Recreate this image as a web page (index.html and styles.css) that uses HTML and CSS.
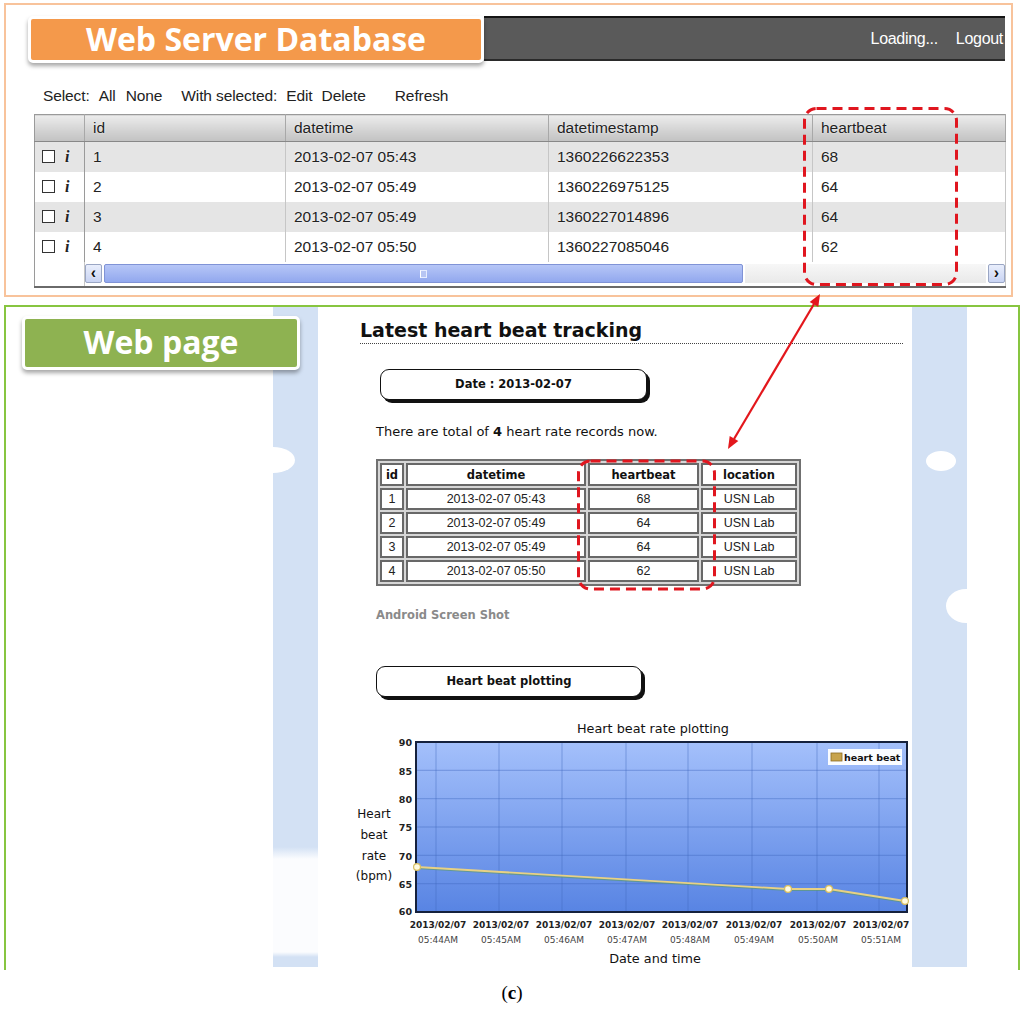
FILE: index.html
```html
<!DOCTYPE html>
<html>
<head>
<meta charset="utf-8">
<title>Heart beat tracking</title>
<link rel="stylesheet" href="styles.css">
</head>
<body>
<div class="page">
  <section class="db-panel">
    <div class="db-header">
      <div class="badge badge-orange">Web Server Database</div>
      <div class="topbar"><span>Loading...</span><span class="logout">Logout</span></div>
    </div>
    <div class="toolbar">
      <span>Select:</span><span class="g9">All</span><span class="g10">None</span><span class="g19">With selected:</span><span class="g9">Edit</span><span class="g9">Delete</span><span class="g29">Refresh</span>
    </div>
    <table class="grid">
      <colgroup><col class="c0"><col class="c1"><col class="c2"><col class="c3"><col class="c4"></colgroup>
      <thead>
        <tr><th></th><th>id</th><th>datetime</th><th>datetimestamp</th><th>heartbeat</th></tr>
      </thead>
      <tbody>
        <tr class="odd"><td class="sel"><span class="cb"></span><i class="info">i</i></td><td>1</td><td>2013-02-07 05:43</td><td>1360226622353</td><td>68</td></tr>
        <tr><td class="sel"><span class="cb"></span><i class="info">i</i></td><td>2</td><td>2013-02-07 05:49</td><td>1360226975125</td><td>64</td></tr>
        <tr class="odd"><td class="sel"><span class="cb"></span><i class="info">i</i></td><td>3</td><td>2013-02-07 05:49</td><td>1360227014896</td><td>64</td></tr>
        <tr><td class="sel"><span class="cb"></span><i class="info">i</i></td><td>4</td><td>2013-02-07 05:50</td><td>1360227085046</td><td>62</td></tr>
        <tr class="scroll"><td class="blank"></td><td colspan="4" class="scell">
          <div class="sbar"><span class="sbtn">&lsaquo;</span><span class="thumb"><span class="grip"></span></span><span class="track"></span><span class="sbtn">&rsaquo;</span></div>
        </td></tr>
      </tbody>
    </table>
  </section>

  <section class="web-panel">
    <div class="web-left">
      <div class="badge badge-green">Web page</div>
    </div>
    <div class="strip strip-left"><span class="cloud cl1"></span></div>
    <div class="webpage">
      <h1 class="wp-title">Latest heart beat tracking</h1>
      <div class="pill pill-date">Date : 2013-02-07</div>
      <p class="total">There are total of <b>4</b> heart rate records now.</p>
      <table class="records">
        <colgroup><col class="r0"><col class="r1"><col class="r2"><col class="r3"></colgroup>
        <tr><th>id</th><th>datetime</th><th>heartbeat</th><th>location</th></tr>
        <tr><td>1</td><td>2013-02-07 05:43</td><td>68</td><td>USN Lab</td></tr>
        <tr><td>2</td><td>2013-02-07 05:49</td><td>64</td><td>USN Lab</td></tr>
        <tr><td>3</td><td>2013-02-07 05:49</td><td>64</td><td>USN Lab</td></tr>
        <tr><td>4</td><td>2013-02-07 05:50</td><td>62</td><td>USN Lab</td></tr>
      </table>
      <p class="android">Android Screen Shot</p>
      <div class="pill pill-plot">Heart beat plotting</div>
      <svg class="chart" width="572" height="252" viewBox="0 0 572 252">
        <defs>
          <linearGradient id="plotbg" x1="0" y1="0" x2="0" y2="1">
            <stop offset="0" stop-color="#a4c0fb"/>
            <stop offset="1" stop-color="#5884e3"/>
          </linearGradient>
        </defs>
        <text class="ct-title" x="313" y="18" text-anchor="middle">Heart beat rate plotting</text>
        <rect x="76" y="27" width="491" height="170" fill="url(#plotbg)"/>
        <g stroke="#3f66bd" stroke-opacity="0.45" stroke-width="1">
          <line x1="76" y1="55.3" x2="567" y2="55.3"/>
          <line x1="76" y1="83.7" x2="567" y2="83.7"/>
          <line x1="76" y1="112" x2="567" y2="112"/>
          <line x1="76" y1="140.3" x2="567" y2="140.3"/>
          <line x1="76" y1="168.7" x2="567" y2="168.7"/>
          <line x1="96" y1="27" x2="96" y2="197"/>
          <line x1="159" y1="27" x2="159" y2="197"/>
          <line x1="222" y1="27" x2="222" y2="197"/>
          <line x1="286" y1="27" x2="286" y2="197"/>
          <line x1="348" y1="27" x2="348" y2="197"/>
          <line x1="412" y1="27" x2="412" y2="197"/>
          <line x1="477" y1="27" x2="477" y2="197"/>
          <line x1="539" y1="27" x2="539" y2="197"/>
        </g>
        <rect x="76" y="27" width="491" height="170" fill="none" stroke="#15213d" stroke-width="2"/>
        <polyline points="77,153 448,175 489,175 565,187" fill="none" stroke="#5f9a73" stroke-width="2" stroke-opacity="0.7"/>
        <polyline points="77,152 448,174 489,174 565,186" fill="none" stroke="#e8d184" stroke-width="1.8"/>
        <g fill="#fffbe2" stroke="#d7bd5e" stroke-width="1.2">
          <circle cx="77" cy="152" r="3.4"/>
          <circle cx="448" cy="174" r="3.4"/>
          <circle cx="489" cy="174" r="3.4"/>
          <circle cx="565" cy="186" r="3.4"/>
        </g>
        <rect x="488" y="34" width="74" height="16" fill="#ffffff" fill-opacity="0.95"/>
        <rect x="491" y="38" width="11" height="8" fill="#c7a34c" stroke="#8d6c22" stroke-width="0.8"/>
        <text class="ct-legend" x="504" y="46">heart beat</text>
        <g class="ct-ynum" text-anchor="end">
          <text x="72" y="31">90</text>
          <text x="72" y="60">85</text>
          <text x="72" y="88">80</text>
          <text x="72" y="116">75</text>
          <text x="72" y="145">70</text>
          <text x="72" y="173">65</text>
          <text x="72" y="200">60</text>
        </g>
        <g class="ct-ytitle" text-anchor="middle">
          <text x="34" y="103">Heart</text>
          <text x="34" y="124">beat</text>
          <text x="34" y="145">rate</text>
          <text x="34" y="165">(bpm)</text>
        </g>
        <g class="ct-date" text-anchor="middle">
          <text x="98" y="213">2013/02/07</text>
          <text x="161" y="213">2013/02/07</text>
          <text x="224" y="213">2013/02/07</text>
          <text x="287" y="213">2013/02/07</text>
          <text x="350" y="213">2013/02/07</text>
          <text x="414" y="213">2013/02/07</text>
          <text x="478" y="213">2013/02/07</text>
          <text x="541" y="213">2013/02/07</text>
        </g>
        <g class="ct-time" text-anchor="middle">
          <text x="98" y="228">05:44AM</text>
          <text x="161" y="228">05:45AM</text>
          <text x="224" y="228">05:46AM</text>
          <text x="287" y="228">05:47AM</text>
          <text x="350" y="228">05:48AM</text>
          <text x="414" y="228">05:49AM</text>
          <text x="478" y="228">05:50AM</text>
          <text x="541" y="228">05:51AM</text>
        </g>
        <text class="ct-title" x="315" y="248" text-anchor="middle">Date and time</text>
      </svg>
    </div>
    <div class="strip strip-right"><span class="cloud cl2"></span><span class="cloud cl3"></span></div>
    <div class="web-rest"></div>
  </section>

  <div class="caption">(<b>c</b>)</div>
</div>

<svg class="overlay" width="1024" height="1009" viewBox="0 0 1024 1009">
  <rect x="804.5" y="108.5" width="152" height="176" rx="12" fill="none" stroke="#e0161f" stroke-width="3" stroke-dasharray="10 6"/>
  <rect x="578.5" y="461" width="136" height="128" rx="12" fill="none" stroke="#e0161f" stroke-width="3" stroke-dasharray="10 6"/>
  <line x1="814" y1="304" x2="734" y2="439" stroke="#e3171c" stroke-width="2.2"/>
  <polygon points="820,294 818.3,306.9 809.7,301.9" fill="#e3171c"/>
  <polygon points="728,449 738.3,441.1 729.7,436.1" fill="#e3171c"/>
</svg>
</body>
</html>
```

FILE: styles.css
```css
* { box-sizing: border-box; }

html, body {
  margin: 0;
  padding: 0;
  background: #ffffff;
}

body {
  width: 1024px;
  height: 1009px;
  position: relative;
  overflow: hidden;
  font-family: "Liberation Sans", Arial, sans-serif;
  color: #222;
}

.page {
  padding: 3px 0 0 4px;
}

/* ---------- top panel ---------- */
.db-panel {
  width: 1009px;
  height: 294px;
  border: 2px solid #f8c39b;
  padding: 11px 6px 0 22px;
}

.db-header {
  display: flex;
  align-items: flex-start;
  height: 47px;
}

.badge {
  border: 3px solid #ffffff;
  border-radius: 5px;
  color: #fff;
  font-family: "Open Sans", "Noto Sans", sans-serif;
  font-weight: 700;
  text-align: center;
  box-shadow: 0 3px 4px rgba(0, 0, 0, 0.35);
  position: relative;
  z-index: 2;
}

.badge-orange {
  width: 456px;
  height: 47px;
  background: #f4994b;
  font-size: 32px;
  line-height: 40px;
}

.topbar {
  flex: 1;
  height: 45px;
  background: #5a5a5a;
  border-top: 2px solid #151515;
  border-bottom: 2px solid #2a2a2a;
  display: flex;
  justify-content: flex-end;
  align-items: center;
  padding-right: 2px;
  color: #fff;
  font-size: 16px;
  letter-spacing: -0.3px;
}

.topbar .logout { margin-left: 18px; }

.toolbar {
  height: 51px;
  display: flex;
  align-items: flex-end;
  padding: 0 0 9px 15px;
  font-size: 15.5px;
  letter-spacing: -0.1px;
  line-height: 18px;
  color: #222;
}

.g9 { margin-left: 9px; }
.g10 { margin-left: 10px; }
.g19 { margin-left: 19px; }
.g29 { margin-left: 29px; }

.grid {
  margin-left: 6px;
  width: 971px;
  table-layout: fixed;
  border-collapse: collapse;
  border: 1px solid #9a9a9a;
  border-bottom: 2px solid #6a6a6a;
  font-size: 15.5px;
  color: #222;
}

.grid .c0 { width: 50px; }
.grid .c1 { width: 201px; }
.grid .c2 { width: 263px; }
.grid .c3 { width: 264px; }
.grid .c4 { width: 193px; }

.grid th {
  height: 27px;
  padding: 0 0 0 8px;
  text-align: left;
  font-weight: normal;
  background: linear-gradient(#ececec, #d2d2d2 60%, #c2c2c2);
  border-right: 1px solid #a8a8a8;
  border-bottom: 1px solid #888;
  text-shadow: 0 0 2px #fff;
}

.grid td {
  height: 30px;
  padding: 0 0 0 8px;
  border-right: 1px solid #c6c6c6;
  background: #ffffff;
  white-space: nowrap;
  text-shadow: 0 0 2px #fff;
}

.grid tr.odd td { background: #e5e5e5; }

.grid td.sel {
  padding-left: 7px;
  border-right: 1px solid #9a9a9a;
}

.cb {
  display: inline-block;
  width: 13px;
  height: 13px;
  border: 1.5px solid #333;
  background: #fff;
  vertical-align: -1px;
}

.info {
  margin-left: 10px;
  font-family: "Liberation Serif", serif;
  font-weight: 700;
  font-size: 16px;
}

.grid tr.scroll td {
  height: 25px;
  background: #fff;
  padding: 0;
}

.grid td.scell { padding: 0 2px; }

.sbar {
  display: flex;
  align-items: center;
  height: 21px;
  gap: 2px;
}

.sbtn {
  width: 17px;
  height: 19px;
  border: 1px solid #9aa6c4;
  background: linear-gradient(#e9eefc, #c9d4f3);
  border-radius: 2px;
  font-weight: 700;
  font-size: 16px;
  line-height: 16px;
  text-align: center;
  color: #111;
}

.thumb {
  width: 639px;
  height: 19px;
  border: 1px solid #8093d6;
  border-radius: 2px;
  background: linear-gradient(#b6c6f7, #92a8ee);
  display: flex;
  justify-content: center;
  align-items: center;
}

.grip {
  width: 7px;
  height: 8px;
  border: 1px solid #e6ecff;
  border-left-color: #fff;
  background: #b7c5f3;
}

.track {
  flex: 1;
  height: 19px;
  background: linear-gradient(#f7f7f7, #e9e9e9);
}

/* ---------- bottom panel ---------- */
.web-panel {
  margin-top: 8px;
  width: 1016px;
  height: 665px;
  border: 2px solid #87c540;
  border-bottom: none;
  display: flex;
}

.web-left {
  width: 267px;
  flex: none;
  padding: 9px 0 0 16px;
}

.badge-green {
  width: 278px;
  height: 54px;
  background: #8eb251;
  font-size: 32px;
  line-height: 46px;
}

.strip {
  flex: none;
  height: 660px;
  position: relative;
  overflow: hidden;
  background: #d3e1f4;
}

.strip-left {
  width: 45px;
  background: linear-gradient(#d3e1f4 0, #d3e1f4 540px, #fbfcfe 552px, #fbfcfe 645px, #d3e1f4 650px);
}

.strip-right {
  width: 55px;
}

.cloud {
  position: absolute;
  border-radius: 50%;
  background: #fff;
}

.cl1 { left: -22px; top: 140px; width: 44px; height: 26px; }
.cl2 { left: 14px; top: 144px; width: 30px; height: 20px; }
.cl3 { left: 34px; top: 282px; width: 40px; height: 34px; }

.webpage {
  width: 594px;
  flex: none;
  height: 663px;
  background: #fff;
  font-family: "DejaVu Sans", Verdana, sans-serif;
  color: #111;
}

.wp-title {
  margin: 11px 0 0 42px;
  width: 543px;
  font-size: 19px;
  font-weight: 700;
  line-height: 24px;
  padding-bottom: 1px;
  border-bottom: 1px dotted #444;
  color: #111;
}

.pill {
  height: 31px;
  border: 1.5px solid #111;
  border-radius: 9px;
  box-shadow: 3px 3px 0 #111;
  background: #fff;
  font-weight: 700;
  font-size: 11.5px;
  line-height: 28px;
  text-align: center;
}

.pill-date {
  width: 267px;
  margin: 25px 0 0 62px;
}

.total {
  margin: 24px 0 0 58px;
  font-size: 13px;
  line-height: 16px;
}

.records {
  margin: 19px 0 0 58px;
  width: 425px;
  table-layout: fixed;
  border: 2px solid #707070;
  border-spacing: 2px;
  background: #d6d6d6;
}

.records .r0 { width: 24px; }
.records .r1 { width: 180px; }
.records .r2 { width: 111px; }
.records .r3 { width: 96px; }

.records th, .records td {
  border: 2px solid #686868;
  background: #fff;
  text-align: center;
  padding: 0;
}

.records th {
  height: 23px;
  font-size: 11.5px;
  font-weight: 700;
}

.records td {
  font-family: "Liberation Sans", Arial, sans-serif;
  font-size: 12.5px;
  color: #222;
  height: 22px;
}

.android {
  margin: 21px 0 0 58px;
  font-size: 11.5px;
  line-height: 16px;
  font-weight: 700;
  color: #8a8a8a;
}

.pill-plot {
  width: 266px;
  margin: 43px 0 0 58px;
}

.chart {
  display: block;
  margin: 18px 0 0 22px;
  font-family: "DejaVu Sans", Verdana, sans-serif;
}

.ct-title { font-size: 12.8px; fill: #111; }
.ct-legend { font-size: 9.5px; font-weight: 700; fill: #111; }
.ct-ynum { font-size: 9.5px; font-weight: 700; fill: #222; }
.ct-ytitle { font-size: 12px; fill: #111; }
.ct-date { font-size: 9px; font-weight: 700; fill: #222; }
.ct-time { font-size: 9px; fill: #444; }

.web-rest { flex: 1; }

.caption {
  margin-top: 13px;
  text-align: center;
  font-family: "Liberation Serif", "Times New Roman", serif;
  font-size: 19px;
  line-height: 20px;
  color: #000;
  padding-right: 4px;
}

.overlay {
  position: absolute;
  left: 0;
  top: 0;
  pointer-events: none;
}
```
